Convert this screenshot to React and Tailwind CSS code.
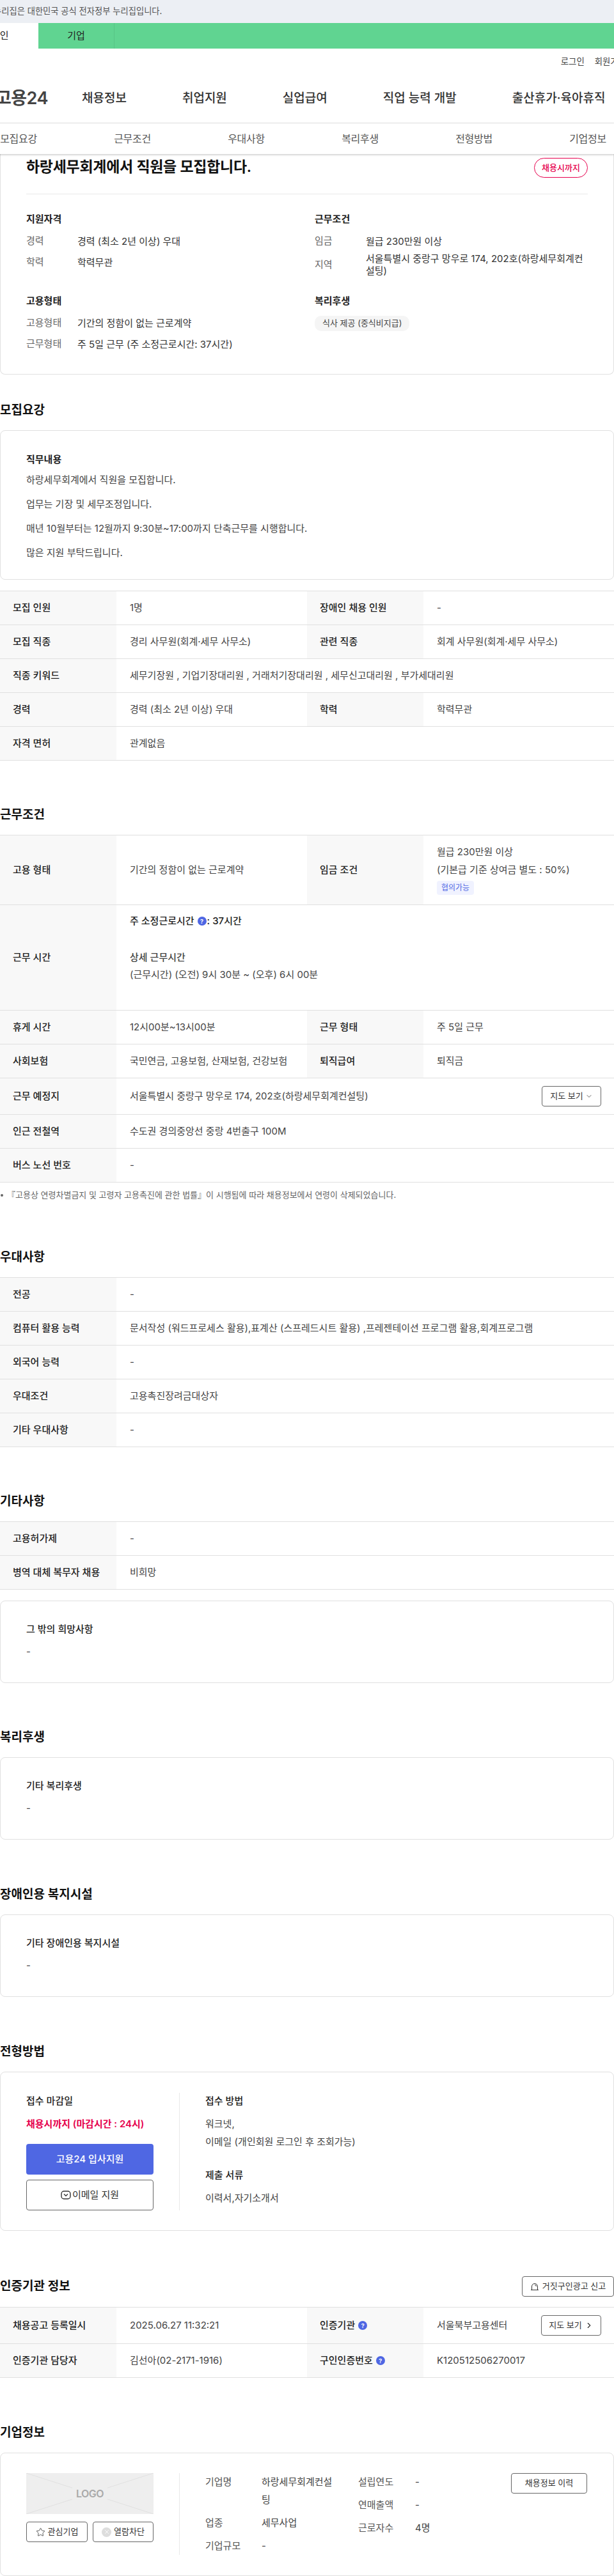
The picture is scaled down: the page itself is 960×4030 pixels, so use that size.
import React from "react";
import { ChevronDown, ChevronRight, Star, X } from "lucide-react";

const Help = () => (
  <span className="ml-[5px] mr-px inline-flex h-[14px] w-[14px] shrink-0 items-center justify-center rounded-full bg-[#4f67e3] text-[9px] font-bold leading-none text-white">
    ?
  </span>
);

const SectionTitle = ({ children, className = "" }) => (
  <h2 className={`mb-4 h-[30px] text-[19px] font-semibold leading-[30px] text-[#111] ${className}`}>
    {children}
  </h2>
);

const Row = ({ h = "h-[53px]", label, value, label2, value2, extra }) => (
  <div className={`grid grid-cols-[182px_298px_182px_298px] border-b border-[#e0e0e0] ${h}`}>
    <div className="flex items-center bg-[#f8f8f8] pl-5 font-medium text-[#222]">{label}</div>
    {label2 ? (
      <>
        <div className="flex items-center pl-[21px] text-[#444]">{value}</div>
        <div className="flex items-center bg-[#f8f8f8] pl-5 font-medium text-[#222]">{label2}</div>
        <div className="flex items-center justify-between pl-[21px] pr-5 text-[#444]">
          {value2}
          {extra}
        </div>
      </>
    ) : (
      <div className="col-span-3 flex items-center justify-between pl-[21px] pr-5 text-[#444]">
        {value}
        {extra}
      </div>
    )}
  </div>
);

const Table = ({ children, className = "" }) => (
  <div className={`border-t border-[#e0e0e0] ${className}`}>{children}</div>
);

const Card = ({ children, className = "" }) => (
  <div className={`rounded-lg border border-[#e0e0e0] ${className}`}>{children}</div>
);

const NoteCard = ({ title, className = "" }) => (
  <Card className={`h-[129px] px-10 pt-[34px] ${className}`}>
    <p className="h-5 leading-5 font-medium text-[#222]">{title}</p>
    <p className="mt-[15px] h-5 leading-5 text-[#444]">-</p>
  </Card>
);

const Info = ({ label, children, h = "h-[33px]" }) => (
  <div className={`flex items-center ${h}`}>
    <span className="w-20 shrink-0 text-[#666]">{label}</span>
    <span className="leading-[19.5px] text-[#333]">{children}</span>
  </div>
);

const OutlineBtn = ({ children, className = "" }) => (
  <button className={`flex h-8 items-center justify-center rounded border border-[#666] bg-white text-[13px] text-[#333] ${className}`}>
    {children}
  </button>
);

const CompanyRow = ({ label, children, labelW = "w-[88px]" }) => (
  <div className="flex leading-7 text-[#444]">
    <span className={`${labelW} shrink-0 text-[#555]`}>{label}</span>
    <span className="min-w-0 break-all">{children}</span>
  </div>
);

const navItems = ["채용정보", "취업지원", "실업급여", "직업 능력 개발", "출산휴가·육아휴직"];
const subItems = ["모집요강", "근무조건", "우대사항", "복리후생", "전형방법", "기업정보"];

const App = () => {
  return (
    <div className="h-[4030px] w-[960px] overflow-hidden bg-white font-['Inter','Noto_Sans_CJK_KR',sans-serif] text-[15px]">
      <div className="flex h-9 items-center overflow-hidden bg-[#eceff4] text-[13.3px] text-[#555]">
        <span className="-ml-[26px] whitespace-nowrap">이 누리집은 대한민국 공식 전자정부 누리집입니다.</span>
      </div>
      <div className="flex h-10 bg-[#60d491] text-[#222]">
        <div className="flex w-[60px] items-center bg-white">
          <span className="-ml-[14px] whitespace-nowrap">개인</span>
        </div>
        <div className="flex w-[119px] items-center justify-center border-r border-[#58c586]">기업</div>
      </div>
      <div className="flex h-10 items-center justify-end gap-4 overflow-hidden whitespace-nowrap text-[13.4px] text-[#444]">
        <span>로그인</span>
        <span className="-mr-[19px]">회원가입</span>
      </div>
      <div className="flex h-[77px] items-center border-b border-[#e8e8e8]">
        <div className="flex w-[128px] shrink-0 justify-end pr-[53px]">
          <span className="whitespace-nowrap text-[27px] font-semibold tracking-[-0.5px] text-[#444]">고용24</span>
        </div>
        <div className="flex gap-[87px] whitespace-nowrap text-[19px] font-medium text-[#333]">
          {navItems.map((item) => (
            <a key={item}>{item}</a>
          ))}
        </div>
      </div>
      <div className="relative z-10 flex h-12 -ml-[60px] bg-white text-[16px] tracking-[-0.32px] text-[#555] shadow-[0_1px_3px_rgba(0,0,0,0.25)]">
        {subItems.map((item) => (
          <a key={item} className="flex w-[178px] shrink-0 items-center justify-center">
            {item}
          </a>
        ))}
      </div>

      <div className="rounded-b-lg border-x border-b border-[#e0e0e0] px-10">
        <div className="flex h-[63px] justify-between border-b border-[#e8e8e8] pt-[6px]">
          <h1 className="text-[23px] font-semibold leading-7 tracking-[-0.3px] text-[#111]">
            하랑세무회계에서 직원을 모집합니다.
          </h1>
          <span className="flex h-[31px] w-[84px] items-center justify-center rounded-full border border-[#e6004d] text-[13px] font-medium text-[#e6004d]">
            채용시까지
          </span>
        </div>
        <div className="grid grid-cols-[451px_1fr] pt-[29px] pb-[30px]">
          <div>
            <h3 className="mb-2 h-5 font-semibold leading-5 text-[#222]">지원자격</h3>
            <Info label="경력">경력 (최소 2년 이상) 우대</Info>
            <Info label="학력">학력무관</Info>
          </div>
          <div>
            <h3 className="mb-2 h-5 font-semibold leading-5 text-[#222]">근무조건</h3>
            <Info label="임금">월급 230만원 이상</Info>
            <Info label="지역" h="h-10">
              서울특별시 중랑구 망우로 174, 202호(하랑세무회계컨
              <br />
              설팅)
            </Info>
          </div>
          <div className="mt-[27px]">
            <h3 className="mb-2 h-5 font-semibold leading-5 text-[#222]">고용형태</h3>
            <Info label="고용형태">기간의 정함이 없는 근로계약</Info>
            <Info label="근무형태">주 5일 근무 (주 소정근로시간: 37시간)</Info>
          </div>
          <div className="mt-[27px]">
            <h3 className="mb-[13px] h-5 font-semibold leading-5 text-[#222]">복리후생</h3>
            <span className="inline-flex h-6 items-center rounded-[10px] bg-[#f5f5f5] px-3 text-[13px] text-[#444]">
              식사 제공 (중식비지급)
            </span>
          </div>
        </div>
      </div>

      <SectionTitle className="mt-[41px]">모집요강</SectionTitle>
      <Card className="h-[234px] px-10 pt-[35px]">
        <p className="h-5 font-semibold leading-5 text-[#222]">직무내용</p>
        <div className="mt-3 flex flex-col gap-[18px] text-[#444]">
          <p className="h-5 leading-5">하랑세무회계에서 직원을 모집합니다.</p>
          <p className="h-5 leading-5">업무는 기장 및 세무조정입니다.</p>
          <p className="h-5 leading-5">매년 10월부터는 12월까지 9:30분~17:00까지 단축근무를 시행합니다.</p>
          <p className="h-5 leading-5">많은 지원 부탁드립니다.</p>
        </div>
      </Card>
      <Table className="mt-[17px]">
        <Row label="모집 인원" value="1명" label2="장애인 채용 인원" value2="-" />
        <Row label="모집 직종" value="경리 사무원(회계·세무 사무소)" label2="관련 직종" value2="회계 사무원(회계·세무 사무소)" />
        <Row label="직종 키워드" value="세무기장원 , 기업기장대리원 , 거래처기장대리원 , 세무신고대리원 , 부가세대리원" />
        <Row label="경력" value="경력 (최소 2년 이상) 우대" label2="학력" value2="학력무관" />
        <Row label="자격 면허" value="관계없음" />
      </Table>

      <SectionTitle className="mt-[70px]">근무조건</SectionTitle>
      <Table>
        <Row
          h="h-[109px]"
          label="고용 형태"
          value="기간의 정함이 없는 근로계약"
          label2="임금 조건"
          value2={
            <div className="flex flex-col items-start">
              <p className="leading-7">월급 230만원 이상</p>
              <p className="leading-7">(기본급 기준 상여금 별도 : 50%)</p>
              <span className="mt-[3px] mb-[3px] rounded bg-[#f0f2ff] px-[7px] py-[2px] text-[12px] leading-[18px] text-[#4f67e3]">협의가능</span>
            </div>
          }
        />
        <Row
          h="h-[165px]"
          label="근무 시간"
          value={
            <div className="flex h-full flex-col pt-[15px] leading-5">
              <p className="flex items-center font-medium text-[#222]">
                주 소정근로시간 <Help />: 37시간
              </p>
              <p className="mt-[37px] font-medium">상세 근무시간</p>
              <p className="mt-[7px]">(근무시간) (오전) 9시 30분 ~ (오후) 6시 00분</p>
            </div>
          }
        />
        <Row label="휴게 시간" value="12시00분~13시00분" label2="근무 형태" value2="주 5일 근무" />
        <Row label="사회보험" value="국민연금, 고용보험, 산재보험, 건강보험" label2="퇴직급여" value2="퇴직금" />
        <Row
          h="h-[57px]"
          label="근무 예정지"
          value="서울특별시 중랑구 망우로 174, 202호(하랑세무회계컨설팅)"
          extra={
            <OutlineBtn className="w-[93px] gap-[3px]">
              지도 보기 <ChevronDown size={12} strokeWidth={1.5} />
            </OutlineBtn>
          }
        />
        <Row label="인근 전철역" value="수도권 경의중앙선 중랑 4번출구 100M" />
        <Row label="버스 노선 번호" value="-" />
      </Table>
      <p className="flex h-10 items-center text-[13px] text-[#666]">
        <span className="ml-[1px] mr-[6px] h-1 w-1 rounded-full bg-[#666]" />
        『고용상 연령차별금지 및 고령자 고용촉진에 관한 법률』이 시행됨에 따라 채용정보에서 연령이 삭제되었습니다.
      </p>

      <SectionTitle className="mt-[62px]">우대사항</SectionTitle>
      <Table>
        <Row label="전공" value="-" />
        <Row label="컴퓨터 활용 능력" value="문서작성 (워드프로세스 활용),표계산 (스프레드시트 활용)  ,프레젠테이션 프로그램 활용,회계프로그램" />
        <Row label="외국어 능력" value="-" />
        <Row label="우대조건" value="고용촉진장려금대상자" />
        <Row label="기타 우대사항" value="-" />
      </Table>

      <SectionTitle className="mt-[70px]">기타사항</SectionTitle>
      <Table>
        <Row label="고용허가제" value="-" />
        <Row label="병역 대체 복무자 채용" value="비희망" />
      </Table>
      <NoteCard title="그 밖의 희망사항" className="mt-[17px]" />

      <SectionTitle className="mt-[70px]">복리후생</SectionTitle>
      <NoteCard title="기타 복리후생" />

      <SectionTitle className="mt-[71px]">장애인용 복지시설</SectionTitle>
      <NoteCard title="기타 장애인용 복지시설" />

      <SectionTitle className="mt-[71px]">전형방법</SectionTitle>
      <Card className="flex h-[249px] px-10 pt-8">
        <div className="flex h-[184px] w-[240px] shrink-0 flex-col border-r border-[#e8e8e8] pr-10">
          <p className="mt-[3px] h-5 font-medium leading-5 text-[#222]">접수 마감일</p>
          <p className="mt-4 h-5 font-semibold leading-5 whitespace-nowrap text-[#e6004d]">채용시까지 (마감시간 : 24시)</p>
          <button className="mt-[21px] h-12 rounded bg-[#4f67e3] font-medium text-white">고용24 입사지원</button>
          <button className="mt-2 flex h-12 items-center justify-center gap-[2px] rounded border border-[#666] text-[#333]">
            <svg width="16" height="16" viewBox="0 0 16 16" fill="none" stroke="#333" strokeWidth="1.4">
              <rect x="1" y="2" width="14" height="12" rx="4" />
              <path d="M5 6.5 8 9.2 11 6.5" />
            </svg>
            이메일 지원
          </button>
        </div>
        <div className="pl-10 text-[#444]">
          <p className="mt-[3px] h-5 font-medium leading-5 text-[#222]">접수 방법</p>
          <p className="mt-4 h-5 leading-5">워크넷,</p>
          <p className="mt-2 h-5 leading-5">이메일 (개인회원 로그인 후 조회가능)</p>
          <p className="mt-8 h-5 font-medium leading-5 text-[#222]">제출 서류</p>
          <p className="mt-4 h-5 leading-5">이력서,자기소개서</p>
        </div>
      </Card>

      <div className="mt-[71px] mb-4 flex items-center justify-between">
        <h2 className="text-[19px] font-semibold text-[#111]">인증기관 정보</h2>
        <OutlineBtn className="w-[144px] gap-[5px]">
          <svg width="14" height="13" viewBox="0 0 14 13" fill="none" stroke="#333" strokeWidth="1">
            <path d="M2.5 11.5V6a4.5 4.5 0 0 1 9 0v5.5M1 11.5h12M7 3.5A2.5 2.5 0 0 1 9.5 6" />
          </svg>
          거짓구인광고 신고
        </OutlineBtn>
      </div>
      <Table>
        <Row
          h="h-[57px]"
          label="채용공고 등록일시"
          value="2025.06.27 11:32:21"
          label2={
            <span className="flex items-center">
              인증기관 <Help />
            </span>
          }
          value2="서울북부고용센터"
          extra={
            <OutlineBtn className="w-[94px] gap-1">
              지도 보기 <ChevronRight size={14} strokeWidth={2} />
            </OutlineBtn>
          }
        />
        <Row
          label="인증기관 담당자"
          value="김선아(02-2171-1916)"
          label2={
            <span className="flex items-center">
              구인인증번호 <Help />
            </span>
          }
          value2="K120512506270017"
        />
      </Table>

      <SectionTitle className="mt-[71px]">기업정보</SectionTitle>
      <Card className="flex h-[193px] px-10 pt-[31px]">
        <div className="h-[128px] w-[240px] shrink-0 border-r border-[#e8e8e8] pr-10">
          <div className="relative flex h-16 items-center justify-center bg-[#eee]">
            <svg className="absolute inset-0 h-full w-full" viewBox="0 0 199 64" preserveAspectRatio="none" stroke="#e0e0e0" fill="none">
              <path d="M0 0 199 64M199 0 0 64" />
            </svg>
            <span className="relative bg-[#eee] px-[6px] text-[16px] font-semibold leading-5 tracking-[-0.5px] text-[#aaa]">LOGO</span>
          </div>
          <div className="mt-3 flex gap-2">
            <OutlineBtn className="w-[96px] gap-1">
              <Star size={15} strokeWidth={1.3} />
              관심기업
            </OutlineBtn>
            <OutlineBtn className="w-[95px] gap-1">
              <span className="flex h-[15px] w-[15px] items-center justify-center rounded-full bg-[#ddd] text-white">
                <X size={10} strokeWidth={2} />
              </span>
              열람차단
            </OutlineBtn>
          </div>
        </div>
        <div className="ml-10 w-[199px] shrink-0">
          <CompanyRow label="기업명">하랑세무회계컨설팅</CompanyRow>
          <div className="mt-2">
            <CompanyRow label="업종">세무사업</CompanyRow>
          </div>
          <div className="mt-2">
            <CompanyRow label="기업규모">-</CompanyRow>
          </div>
        </div>
        <div className="ml-10 flex w-[199px] shrink-0 flex-col gap-2">
          <CompanyRow label="설립연도" labelW="w-[89px]">-</CompanyRow>
          <CompanyRow label="연매출액" labelW="w-[89px]">-</CompanyRow>
          <CompanyRow label="근로자수" labelW="w-[89px]">4명</CompanyRow>
        </div>
        <OutlineBtn className="ml-10 w-[119px]">채용정보 이력</OutlineBtn>
      </Card>
    </div>
  );
};

export default App;
